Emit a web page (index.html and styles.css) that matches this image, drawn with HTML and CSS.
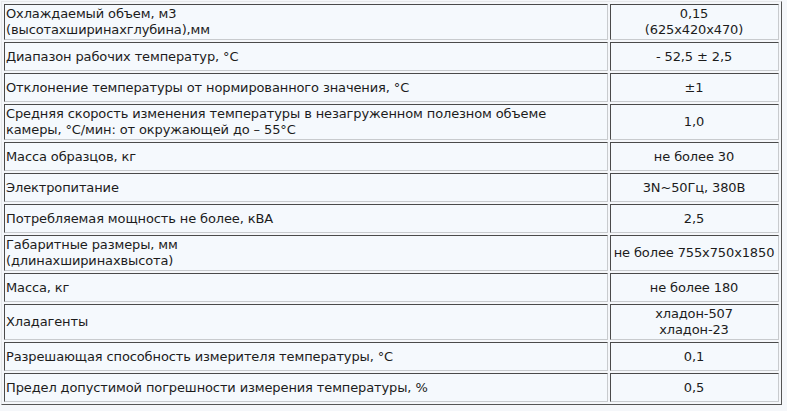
FILE: index.html
```html
<!DOCTYPE html>
<html lang="ru">
<head>
<meta charset="utf-8">
<title>Характеристики</title>
<link rel="stylesheet" href="styles.css">
</head>
<body>
<table class="specs">
  <tr class="two"><td class="name">Охлаждаемый объем, м3<br>(высотахширинахглубина),мм</td><td class="val">0,15<br>(625х420х470)</td></tr>
  <tr><td class="name">Диапазон рабочих температур, °С</td><td class="val">- 52,5 ± 2,5</td></tr>
  <tr><td class="name">Отклонение температуры от нормированного значения, °С</td><td class="val">±1</td></tr>
  <tr class="two"><td class="name">Средняя скорость изменения температуры в незагруженном полезном объеме камеры, °С/мин: от окружающей до – 55°С</td><td class="val">1,0</td></tr>
  <tr><td class="name">Масса образцов, кг</td><td class="val">не более 30</td></tr>
  <tr><td class="name">Электропитание</td><td class="val">3N~50Гц, 380В</td></tr>
  <tr><td class="name">Потребляемая мощность не более, кВА</td><td class="val">2,5</td></tr>
  <tr class="two"><td class="name">Габаритные размеры, мм<br>(длинахширинахвысота)</td><td class="val">не более 755х750х1850</td></tr>
  <tr><td class="name">Масса, кг</td><td class="val">не более 180</td></tr>
  <tr class="two"><td class="name">Хладагенты</td><td class="val">хладон-507<br>хладон-23</td></tr>
  <tr><td class="name">Разрешающая способность измерителя температуры, °С</td><td class="val">0,1</td></tr>
  <tr><td class="name">Предел допустимой погрешности измерения температуры, %</td><td class="val">0,5</td></tr>
</table>
</body>
</html>
```

FILE: styles.css
```css
html, body {
  margin: 0;
  padding: 0;
  background: #f5f7fa;
}
body {
  padding: 1px 0 0 1px;
}
.specs {
  width: 781px;
  border-collapse: separate;
  border-spacing: 2px;
  border: 1px solid;
  border-color: #e6e8ea #555 #555 #e6e8ea;
  font-family: "DejaVu Sans", Verdana, sans-serif;
  font-size: 13px;
  line-height: 16px;
  letter-spacing: -0.12px;
  color: #1c1c1c;
}
.specs td {
  background: #f5f9fd;
  border: 1px solid;
  border-color: #4a4a4a #c8cbce #c8cbce #4a4a4a;
  padding: 1px 2px 1px 1px;
  height: 25px;
  vertical-align: middle;
  box-sizing: content-box;
}
.specs tr.two td {
  height: 32px;
}
.specs td.name {
  width: 599px;
  text-align: left;
}
.specs td.val {
  text-align: center;
}
```
